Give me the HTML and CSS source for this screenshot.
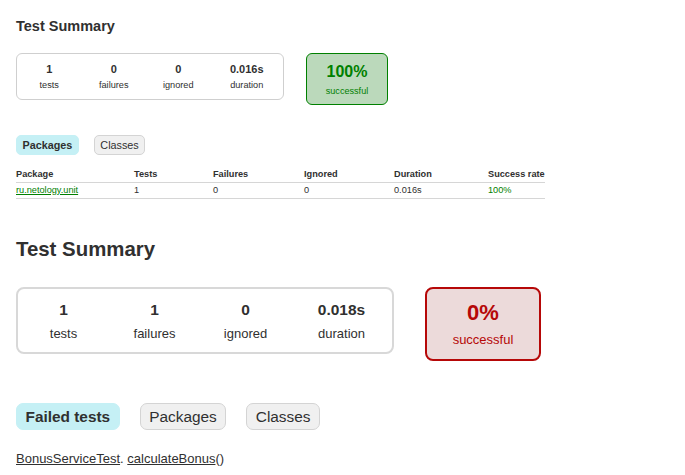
FILE: index.html
```html
<!DOCTYPE html>
<html lang="en">
<head>
<meta charset="utf-8">
<title>Test results</title>
<link rel="stylesheet" href="styles.css">
</head>
<body>
<div class="page">
  <section class="report sm">
    <h1 class="title">Test Summary</h1>
    <div class="summary">
      <div class="counts">
        <div class="info"><div class="counter">1</div><div class="label">tests</div></div>
        <div class="info"><div class="counter">0</div><div class="label">failures</div></div>
        <div class="info"><div class="counter">0</div><div class="label">ignored</div></div>
        <div class="info dur"><div class="counter">0.016s</div><div class="label">duration</div></div>
      </div>
      <div class="rate success">
        <div class="percent">100%</div>
        <div class="label">successful</div>
      </div>
    </div>
    <ul class="tabs">
      <li class="tab selected">Packages</li>
      <li class="tab">Classes</li>
    </ul>
    <table class="results">
      <colgroup>
        <col class="c-pkg"><col class="c-tests"><col class="c-fail"><col class="c-ign"><col class="c-dur"><col class="c-rate">
      </colgroup>
      <thead>
        <tr><th>Package</th><th>Tests</th><th>Failures</th><th>Ignored</th><th>Duration</th><th>Success rate</th></tr>
      </thead>
      <tbody>
        <tr><td class="ok"><a href="#">ru.netology.unit</a></td><td>1</td><td>0</td><td>0</td><td>0.016s</td><td class="ok">100%</td></tr>
      </tbody>
    </table>
  </section>

  <section class="report lg">
    <h1 class="title">Test Summary</h1>
    <div class="summary">
      <div class="counts">
        <div class="info"><div class="counter">1</div><div class="label">tests</div></div>
        <div class="info"><div class="counter">1</div><div class="label">failures</div></div>
        <div class="info"><div class="counter">0</div><div class="label">ignored</div></div>
        <div class="info dur"><div class="counter">0.018s</div><div class="label">duration</div></div>
      </div>
      <div class="rate failure">
        <div class="percent">0%</div>
        <div class="label">successful</div>
      </div>
    </div>
    <ul class="tabs">
      <li class="tab selected">Failed tests</li>
      <li class="tab">Packages</li>
      <li class="tab">Classes</li>
    </ul>
    <div class="failed-link"><a href="#">BonusServiceTest</a>. <a href="#">calculateBonus</a>()</div>
  </section>
</div>
</body>
</html>
```

FILE: styles.css
```css
* { box-sizing: border-box; }

body {
  margin: 0;
  font-family: "Liberation Sans", Arial, sans-serif;
  color: #303030;
  background: #ffffff;
}

a { color: #303030; }

.page { padding: 0 16px; }

.title { margin: 0; font-weight: bold; }

.summary { display: flex; align-items: flex-start; }

.counts { display: flex; border-style: solid; }

.info { text-align: center; }

.counter { font-weight: bold; }

.rate { text-align: center; border-style: solid; }

.percent { font-weight: bold; }

.success { background: #bbd9bb; border-color: #008000; color: #008000; }
.failure { background: #ecdada; border-color: #b60808; color: #b60808; }

.tabs { display: flex; list-style: none; margin: 0; padding: 0; }

.tab {
  display: flex;
  align-items: center;
  border: 1px solid #d4d4d4;
  background: #f0f0f0;
}

.tab.selected {
  background: #c5f0f5;
  border-color: #c5f0f5;
  font-weight: bold;
}

/* ---------- small report ---------- */
.sm .title { font-size: 14.5px; line-height: 17px; margin-top: 18px; }
.sm .summary { margin-top: 18px; gap: 22px; }
.sm .counts { border-width: 1px; border-color: #cfcfcf; border-radius: 6px; padding: 9px 0 8px; }
.sm .info { width: 64.5px; }
.sm .info.dur { width: 72.5px; }
.sm .counter { font-size: 11px; line-height: 13px; }
.sm .label { font-size: 9.2px; line-height: 11px; margin-top: 4px; }
.sm .rate { width: 82px; border-width: 1px; border-radius: 6px; padding: 9px 0 7.5px; }
.sm .percent { font-size: 16px; line-height: 18px; }
.sm .rate .label { font-size: 9.1px; margin-top: 4.5px; }

.sm .tabs { margin-top: 30px; gap: 15px; }
.sm .tab { height: 20px; padding: 0 5.5px; font-size: 10.8px; line-height: 12px; border-radius: 5px; }

.results {
  margin-top: 11px;
  width: 529px;
  table-layout: fixed;
  border-collapse: collapse;
  font-size: 9.2px;
  line-height: 11px;
}
.results th {
  text-align: left;
  font-weight: bold;
  padding: 3px 0 2px;
  border-bottom: 1px solid #d6d6d6;
}
.results td {
  padding: 1.5px 0 2.5px;
  border-bottom: 1px solid #d6d6d6;
}
.results .ok, .results .ok a { color: #008000; }
.c-pkg { width: 118px; }
.c-tests { width: 79px; }
.c-fail { width: 91px; }
.c-ign { width: 90px; }
.c-dur { width: 94px; }
.c-rate { width: 57px; }

/* ---------- large report ---------- */
.lg .title { font-size: 20.4px; line-height: 24px; margin-top: 38px; }
.lg .summary { margin-top: 26px; gap: 31px; }
.lg .counts { border-width: 2px; border-color: #d8d8d8; border-radius: 8px; padding: 12px 0 11.5px; }
.lg .info { width: 91px; }
.lg .info.dur { width: 101px; }
.lg .counter { font-size: 15.5px; line-height: 18px; }
.lg .label { font-size: 13px; line-height: 15px; margin-top: 6.5px; }
.lg .rate { width: 116px; border-width: 2px; border-radius: 8px; padding: 11.4px 0 12px; }
.lg .percent { font-size: 22px; line-height: 26px; }
.lg .rate .label { margin-top: 5.6px; }

.lg .tabs { margin-top: 42px; gap: 20px; }
.lg .tab { height: 27.5px; padding: 0 8.5px; font-size: 15.4px; line-height: 18px; border-radius: 7px; }

.failed-link { margin-top: 21px; font-size: 13px; line-height: 15px; }
```
